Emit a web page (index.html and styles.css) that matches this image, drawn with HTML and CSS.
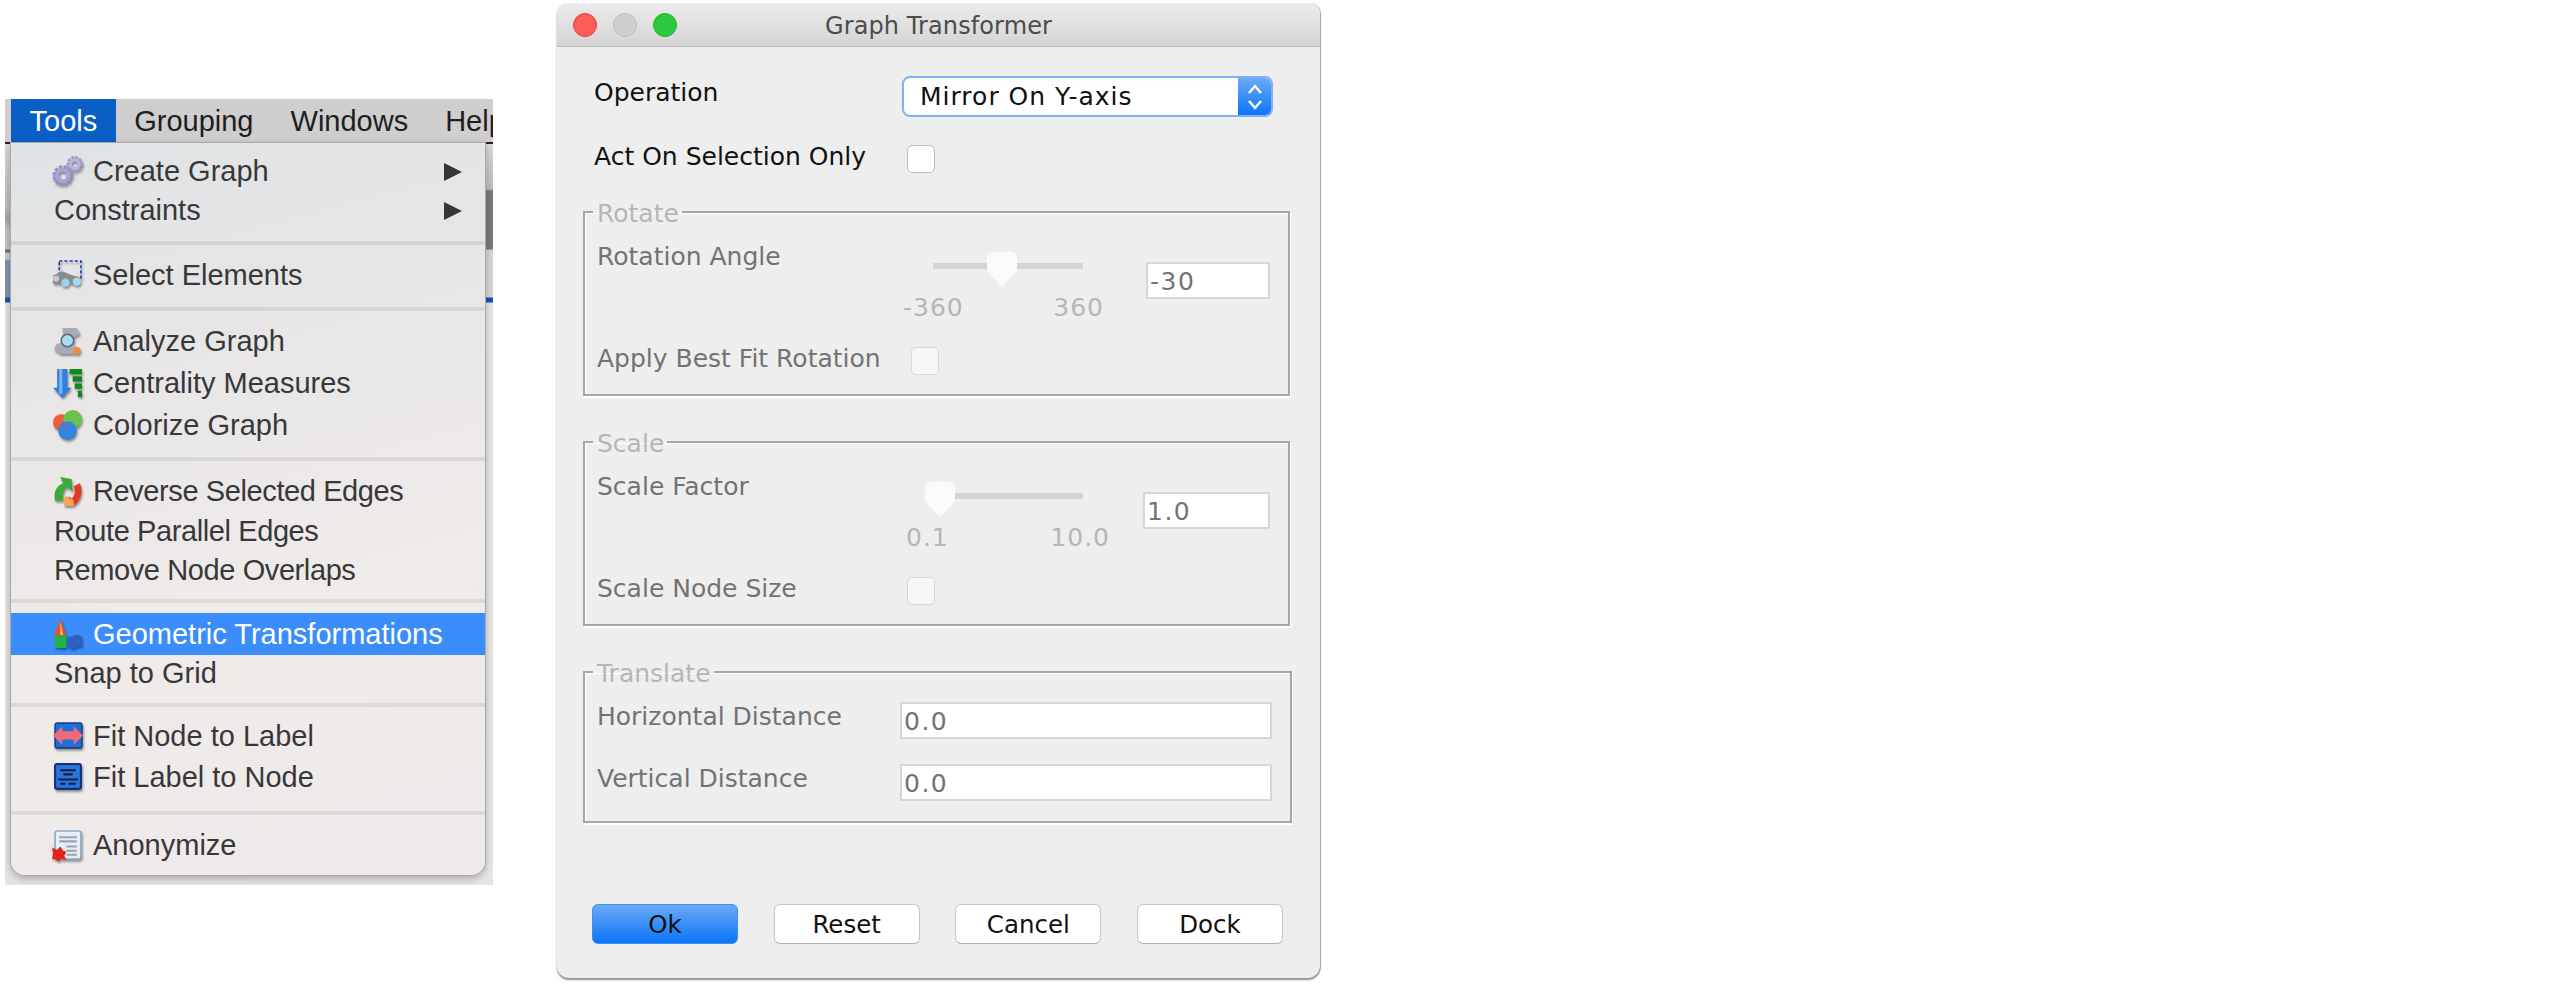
FILE: index.html

```html
<!DOCTYPE html>
<html lang="en">
<head>
  <meta charset="UTF-8">
  <meta name="viewport" content="width=device-width, initial-scale=1.0">
  <title>Graph Transformer</title>
  <link rel="stylesheet" href="styles.css">
</head>
<body>
  <div class="menu-shot">
    <div class="menubar">
      <span class="menubar-item active">Tools</span>
      <span class="menubar-item">Grouping</span>
      <span class="menubar-item">Windows</span>
      <span class="menubar-item">Help</span>
    </div>
    <div class="menu">
      <div class="menu-group g-create">
        <div class="menu-item">
          <svg class="icon" viewBox="0 0 30 30">
            <circle cx="10.5" cy="19" r="7" fill="none" stroke="#8f8fc4" stroke-width="6" stroke-dasharray="2.5 1.2"/>
            <circle cx="10.5" cy="19" r="5.5" fill="none" stroke="#a5a5d6" stroke-width="4"/>
            <circle cx="22" cy="8" r="5.5" fill="none" stroke="#9c9cc8" stroke-width="5" stroke-dasharray="2.2 1"/>
            <circle cx="22" cy="8" r="4.2" fill="none" stroke="#b4b4dc" stroke-width="3"/>
          </svg>
          <span class="label">Create Graph</span><span class="arrow"></span>
        </div>
        <div class="menu-item plain"><span class="label">Constraints</span><span class="arrow"></span></div>
      </div>
      <div class="menu-group g-select">
        <div class="menu-item">
          <svg class="icon" viewBox="0 0 30 30">
            <rect x="7" y="1" width="21" height="16" fill="none" stroke="#2340a8" stroke-width="1.6" stroke-dasharray="3 2"/>
            <path d="M1 15l9-4 10 4 7 2v6H1z" fill="#8b8b8b"/>
            <circle cx="13" cy="22" r="4" fill="#9fd0f2"/>
            <circle cx="24" cy="21" r="4" fill="#a9d8f7"/>
            <circle cx="4" cy="18" r="3" fill="#c9c9c9"/>
          </svg>
          <span class="label">Select Elements</span>
        </div>
      </div>
      <div class="menu-group g-analyze">
        <div class="menu-item">
          <svg class="icon" viewBox="0 0 30 30">
            <path d="M10 2h14l3 6-6 3v8l5 5-6 3H8L2 23l2-5 7-3V9z" fill="#a9a9b8"/>
            <circle cx="15" cy="14" r="6" fill="#a8dcef" stroke="#5d6a80" stroke-width="1.5"/>
            <circle cx="24" cy="24" r="3.6" fill="#f08a3c"/>
          </svg>
          <span class="label">Analyze Graph</span>
        </div>
        <div class="menu-item">
          <svg class="icon" viewBox="0 0 30 30">
            <path d="M5 1h10v18h4l-9 10L1 19h4z" fill="#2f7fe0"/>
            <path d="M7 1h3v24H7z" fill="#7cb6f2"/>
            <path d="M17 1h12v5H17zM20 8h9v5h-9zM22 15h7v5h-7zM25 22h4v6h-4z" fill="#0d8a1a"/>
          </svg>
          <span class="label">Centrality Measures</span>
        </div>
        <div class="menu-item">
          <svg class="icon" viewBox="0 0 30 30">
            <circle cx="9" cy="12" r="8" fill="#ee5b3e"/>
            <circle cx="20" cy="9" r="9" fill="#6cc04c"/>
            <circle cx="15" cy="20" r="9" fill="#2f86e0"/>
            <circle cx="13" cy="16" r="3" fill="#6f6cc0"/>
          </svg>
          <span class="label">Colorize Graph</span>
        </div>
      </div>
      <div class="menu-group g-edges">
        <div class="menu-item">
          <svg class="icon" viewBox="0 0 30 30">
            <path d="M3 24C1 15 5 9 11 7L8 1l11 2 1 12-5-4c-4 2-5 6-4 13z" fill="#3fa83a"/>
            <path d="M27 7c3 7 2 15-5 21h-8l-3-6 6-2 2 2c3-3 4-7 2-12z" fill="#e23a26"/>
            <path d="M12 29l-1-7 4-3 2 3 4 1v6z" fill="#f7a35c"/>
          </svg>
          <span class="label tight">Reverse Selected Edges</span>
        </div>
        <div class="menu-item plain"><span class="label tight">Route Parallel Edges</span></div>
        <div class="menu-item plain"><span class="label tight">Remove Node Overlaps</span></div>
      </div>
      <div class="menu-group g-geo">
        <div class="menu-item selected">
          <svg class="icon" viewBox="0 0 30 30">
            <path d="M8 0l6 16H2z" fill="#e8503a"/>
            <path d="M8 2l3 14H8z" fill="#f6b04a"/>
            <path d="M2 16h12v12H3z" fill="#1fb54a"/>
            <path d="M15 18l9-3 5 2v9l-10 3-4-3z" fill="#2c62c4"/>
          </svg>
          <span class="label">Geometric Transformations</span>
        </div>
        <div class="menu-item plain"><span class="label">Snap to Grid</span></div>
      </div>
      <div class="menu-group g-fit">
        <div class="menu-item">
          <svg class="icon" viewBox="0 0 30 30">
            <rect x="3" y="2" width="26" height="24" rx="2" fill="#1f6fd6" stroke="#143f8c" stroke-width="1.5"/>
            <path d="M1 14l9-9v5h11V5l9 9-9 9v-5H10v5z" fill="#ee6a78"/>
          </svg>
          <span class="label">Fit Node to Label</span>
        </div>
        <div class="menu-item">
          <svg class="icon" viewBox="0 0 30 30">
            <rect x="3" y="2" width="25" height="24" rx="2" fill="#2a74d8" stroke="#12307c" stroke-width="2"/>
            <path d="M8 8h15M11 12h9M6 17h19M8 21h5M16 21h7" stroke="#10204c" stroke-width="2"/>
          </svg>
          <span class="label">Fit Label to Node</span>
        </div>
      </div>
      <div class="menu-group g-anon">
        <div class="menu-item">
          <svg class="icon" viewBox="0 0 30 30">
            <rect x="3" y="1" width="25" height="27" rx="2" fill="#e6edf6" stroke="#8fa6c8" stroke-width="1.5"/>
            <path d="M7 7h17M7 11h17M14 16h10M14 20h10M14 24h10" stroke="#9aa4b0" stroke-width="2"/>
            <path d="M0 17l5 2 3-3 3 4 3 1-2 4 2 4-5-1-3 3-3-3-3 0 1-5z" fill="#e0261c"/>
          </svg>
          <span class="label">Anonymize</span>
        </div>
      </div>
    </div>
  </div>

  <div class="dialog">
    <div class="titlebar">
      <span class="light red"></span>
      <span class="light gray"></span>
      <span class="light green"></span>
      <span class="title">Graph Transformer</span>
    </div>
    <div class="dialog-body">
      <div class="top-row op-row">
        <span class="top-label">Operation</span>
        <div class="select">
          <span class="select-value">Mirror On Y-axis</span>
          <span class="select-arrows">
            <svg viewBox="0 0 16 28" width="16" height="28"><path d="M2 10l6-7 6 7M2 18l6 7 6-7" fill="none" stroke="#fff" stroke-width="2.4"/></svg>
          </span>
        </div>
      </div>
      <div class="top-row act-row">
        <span class="top-label">Act On Selection Only</span>
        <span class="check"></span>
      </div>

      <fieldset class="group rotate">
        <legend>Rotate</legend>
        <div class="group-row">
          <span class="row-label">Rotation Angle</span>
          <div class="slider">
            <div class="track"><span class="thumb"></span></div>
            <div class="ticks"><span>-360</span><span>360</span></div>
          </div>
          <span class="field short">-30</span>
        </div>
        <div class="check-row">
          <span class="row-label">Apply Best Fit Rotation</span>
          <span class="check dim"></span>
        </div>
      </fieldset>

      <fieldset class="group scale">
        <legend>Scale</legend>
        <div class="group-row">
          <span class="row-label">Scale Factor</span>
          <div class="slider">
            <div class="track"><span class="thumb"></span></div>
            <div class="ticks"><span>0.1</span><span>10.0</span></div>
          </div>
          <span class="field short">1.0</span>
        </div>
        <div class="check-row">
          <span class="row-label">Scale Node Size</span>
          <span class="check dim"></span>
        </div>
      </fieldset>

      <fieldset class="group translate">
        <legend>Translate</legend>
        <div class="field-row">
          <span class="row-label">Horizontal Distance</span>
          <span class="field wide">0.0</span>
        </div>
        <div class="field-row">
          <span class="row-label">Vertical Distance</span>
          <span class="field wide">0.0</span>
        </div>
      </fieldset>

      <div class="buttons">
        <button class="btn primary">Ok</button>
        <button class="btn">Reset</button>
        <button class="btn">Cancel</button>
        <button class="btn">Dock</button>
      </div>
    </div>
  </div>
</body>
</html>
```

FILE: styles.css

```css
:root {
  --dialog-bg: #eeeeee;
  --group-line: #a6a6a6;
  --dim-text: #737373;
  --faint-text: #b6b6b6;
  --field-line: #d6d6d6;
}
* { box-sizing: border-box; margin: 0; padding: 0; }
html, body { height: 100%; }
body {
  background: #fff;
  display: flex;
  align-items: flex-start;
  padding: 3px 0 0 5px;
  overflow: hidden;
}

/* left picture: the Tools menu */
.menu-shot {
  width: 488px;
  height: 786px;
  margin-top: 96px;
  flex: none;
  overflow: hidden;
  background:
    linear-gradient(#d8d8d8 0 46px, #c4c4c4 90px, #bbb 110px, #a5a5a5 120px, #c0c0c0 130px, #c4c4c4 150px, #6f6f6f 151px 153px, #c8c8c8 154px 160px, #7f93b0 162px 198px, #1b4fb5 199px 203px, #e4e4e4 204px) left / 50% 100% no-repeat,
    linear-gradient(#d8d8d8 0 46px, #bdbdbd 90px, #7a7a7a 92px 150px, #d6d6d6 151px 198px, #1b4fb5 199px 203px, #e6e6e6 204px) right / 50% 100% no-repeat;
  font-family: "Liberation Sans", sans-serif;
}
.menubar {
  height: 45px;
  display: flex;
  padding-left: 6px;
  background: #cfcdcd;
  border-bottom: 2px solid #222;
  font-size: 29px;
  color: #1e1e20;
  white-space: nowrap;
  overflow: hidden;
}
.menubar-item {
  height: 44px;
  line-height: 44px;
  padding: 0 18.5px;
}
.menubar-item.active {
  background: #0a5fc6;
  color: #fff;
}
.menu {
  width: 474px;
  height: 732px;
  margin: -1px 0 0 6px;
  position: relative;
  background: linear-gradient(165deg, #dfe3e5 0%, #e8e6e6 30%, #eeebe9 60%, #efeae9 100%);
  border-radius: 0 0 14px 14px;
  box-shadow: 0 0 0 1px #aaaaaa, 0 3px 8px rgba(0,0,0,0.3);
  color: #38383a;
  font-size: 29px;
}
.menu-group { border-bottom: 4px solid rgba(0,0,0,0.07); }
.g-create { padding: 9px 0 11px; }
.g-create .menu-item { height: 39px; }
.g-select { padding: 10px 0 12px; }
.g-analyze { padding: 9px 0 11px; }
.g-analyze .menu-item { height: 42px; }
.g-edges { padding: 10px 0 9px; }
.g-edges .plain:last-child { height: 39px; }
.g-geo { padding: 10px 0 12px; }
.g-geo .selected { height: 42px; }
.g-geo .plain { height: 36px; }
.g-fit { padding: 9px 0 13px; }
.g-fit .menu-item { height: 41px; }
.g-anon { padding-top: 10px; border-bottom: 0; }
.menu-item {
  height: 40px;
  display: flex;
  align-items: center;
  padding-left: 41px;
}
.menu-item.plain { padding-left: 43px; }
.menu-item.selected {
  background: #3b8dfb;
  color: #fff;
}
.icon {
  width: 31px;
  height: 31px;
  margin-right: 10px;
  flex: none;
  filter: drop-shadow(1px 2px 1px rgba(0,0,0,0.4));
}
.label { white-space: nowrap; }
.label.tight { letter-spacing: -0.4px; }
.arrow {
  width: 0;
  height: 0;
  margin-left: auto;
  margin-right: 23px;
  border-left: 18px solid #38343a;
  border-top: 9px solid transparent;
  border-bottom: 9px solid transparent;
}

/* right picture: the dialog */
.dialog {
  width: 763px;
  height: 975px;
  margin-left: 64px;
  flex: none;
  background: var(--dialog-bg);
  border-radius: 10px 10px 12px 12px;
  box-shadow: 0 2px 2px rgba(0,0,0,0.45), 1px 0 0 #bdbdbd;
  font-family: "DejaVu Sans", sans-serif;
  font-size: 25px;
  overflow: hidden;
}
.titlebar {
  height: 44px;
  display: flex;
  align-items: center;
  position: relative;
  padding-left: 16px;
  gap: 16px;
  background: linear-gradient(#ececec, #d4d4d4);
  border-bottom: 1px solid #bcbcbc;
  font-size: 24px;
}
.light {
  width: 24px;
  height: 24px;
  border-radius: 50%;
}
.light.red { background: #fc5b57; border: 1px solid #e0443e; }
.light.gray { background: #cfcfcf; border: 1px solid #bdbdbd; }
.light.green { background: #2ac940; border: 1px solid #1fb32f; }
.title {
  position: absolute;
  left: 0;
  right: 0;
  padding-top: 2px;
  text-align: center;
  letter-spacing: 0.1px;
  color: #4c4c4c;
}
.dialog-body { padding: 0 37px 0 26px; }
.top-row {
  display: flex;
  align-items: flex-start;
  padding-left: 11px;
  color: #111;
}
.op-row { padding-top: 29px; height: 93px; }
.act-row { height: 57px; }
.top-label { line-height: 34px; flex: none; white-space: nowrap; }
.op-row .top-label { width: 308px; }
.act-row .top-label { width: 313px; }
.act-row .check { margin-top: 5px; }
.select {
  width: 371px;
  height: 41px;
  display: flex;
  align-items: center;
  background: #fff;
  border: 2px solid #7db0f5;
  border-radius: 8px;
  overflow: hidden;
}
.select-value {
  flex: 1;
  padding-left: 16px;
  letter-spacing: 1px;
  color: #111;
}
.select-arrows {
  width: 33px;
  height: 100%;
  display: flex;
  align-items: center;
  justify-content: center;
  background: linear-gradient(#6aaaf6, #0a76f8);
}
.check {
  width: 28px;
  height: 28px;
  flex: none;
  background: #fff;
  border: 1px solid #bcbcbc;
  border-radius: 5px;
}
.check.dim {
  background: #f6f7f7;
  border-color: #d8d8d8;
}

/* disabled groups */
.group {
  width: 707px;
  border: 2px solid var(--group-line);
  box-shadow: 1px 2px 0 #fff, inset 1px 1px 0 #fff;
  padding: 14px 18px 0 12px;
  color: var(--dim-text);
}
.group legend {
  margin-left: -4px;
  padding: 4px 3px 0 4px;
  line-height: 26px;
  color: var(--faint-text);
}
.group.rotate { height: 199px; }
.group.scale { height: 199px; margin-top: 31px; }
.group.translate { height: 166px; margin-top: 31px; }
.row-label { line-height: 32px; white-space: nowrap; flex: none; }
.group-row {
  display: flex;
  height: 102px;
  align-items: flex-start;
}
.group-row .row-label { width: 306px; }
.scale .group-row .row-label { width: 309px; }
.slider {
  width: 201px;
  flex: none;
  padding-top: 22px;
}
.scale .slider { width: 204px; }
.track {
  width: 150px;
  height: 6px;
  margin-left: 30px;
  background: #d4d4d4;
  position: relative;
}
.scale .track { margin-left: 27px; }
.thumb {
  position: absolute;
  left: 54px;
  top: -11px;
  width: 30px;
  height: 35px;
  background: #fbfbfb;
  border-radius: 6px 6px 0 0;
  clip-path: polygon(0 0, 100% 0, 100% 55%, 50% 100%, 0 55%);
}
.scale .thumb { left: -8px; }
.ticks {
  display: flex;
  justify-content: space-between;
  margin-top: 24px;
  color: var(--faint-text);
  letter-spacing: 1px;
  line-height: 30px;
}
.field {
  height: 37px;
  line-height: 36px;
  background: #fff;
  border: 2px solid var(--field-line);
  padding-left: 2px;
  letter-spacing: 1.5px;
  color: var(--dim-text);
}
.field.short {
  width: 124px;
  margin: 21px 0 0 42px;
}
.scale .field.short {
  width: 127px;
  margin-left: 33px;
}
.check-row {
  display: flex;
  align-items: flex-start;
}
.check-row .row-label { width: 314px; }
.scale .check-row .row-label { width: 310px; }
.check-row .check { margin-top: 4px; }
.field-row {
  display: flex;
  align-items: flex-start;
  height: 62px;
}
.field-row .row-label { width: 303px; }
.field.wide { width: 372px; margin-top: 1px; }

.buttons {
  display: flex;
  justify-content: space-between;
  width: 691px;
  margin: 81px 0 0 9px;
}
.btn {
  width: 146px;
  height: 40px;
  background: #fff;
  border: 1px solid #c6c6c6;
  border-bottom-color: #b0b0b0;
  border-radius: 6px;
  font: inherit;
  font-size: 24.5px;
  color: #111;
}
.btn.primary {
  background: linear-gradient(#69a9f6, #0a76f8);
  border-color: #3f8ef0;
}
```
